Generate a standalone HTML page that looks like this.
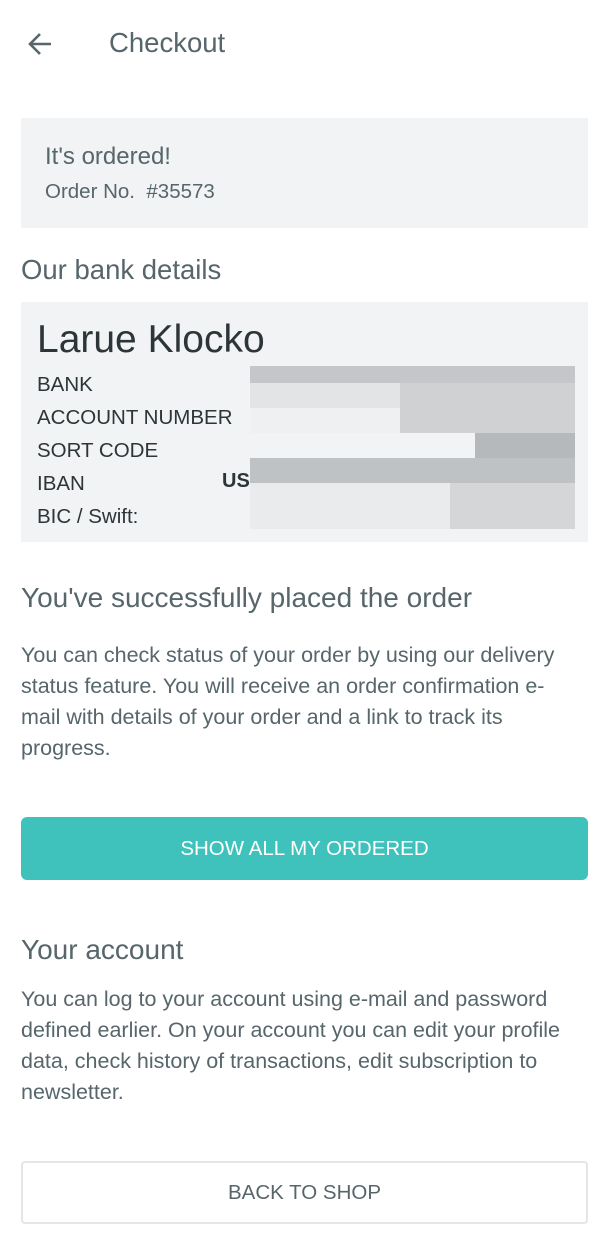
<!DOCTYPE html>
<html><head><meta charset="utf-8"><style>
*{margin:0;padding:0;box-sizing:border-box}
body{width:608px;height:1258px;background:#fff;font-family:"Liberation Sans",sans-serif;color:#56666b;position:relative;overflow:hidden}
.a{position:absolute}
.blk{position:absolute;background:#b9bcbf}
</style></head><body>
<svg class="a" style="left:26px;top:30px" width="28" height="28" viewBox="0 0 28 28"><path d="M25 14H4M14 4L4 14l10 10" stroke="#56666b" stroke-width="2.6" fill="none"/></svg>
<div class="a" style="left:109px;top:27px;font-size:27.5px">Checkout</div>
<div class="a" style="left:21px;top:118px;width:567px;height:110px;background:#f2f3f5"></div>
<div class="a" style="left:45px;top:143px;font-size:24px">It's ordered!</div>
<div class="a" style="left:45px;top:180px;font-size:20.5px">Order No. &nbsp;#35573</div>
<div class="a" style="left:21px;top:254px;font-size:27.5px">Our bank details</div>
<div class="a" style="left:21px;top:302px;width:567px;height:240px;background:#f2f3f5"></div>
<div class="a" style="left:37px;top:318px;font-size:39px;color:#2c3538">Larue Klocko</div>
<div class="a" style="left:37px;top:368px;font-size:20.5px;color:#2c3538;line-height:33px">BANK<br>ACCOUNT NUMBER<br>SORT CODE<br>IBAN<br>BIC / Swift:</div>
<div class="a" style="left:222px;top:470px;font-size:20px;font-weight:bold;color:#2c3538">US</div>
<div class="blk" style="left:250px;top:366px;width:325px;height:17px;background:#c4c6c9"></div>
<div class="blk" style="left:250px;top:383px;width:325px;height:25px;background:#e2e4e6"></div>
<div class="blk" style="left:400px;top:383px;width:175px;height:50px;background:#cfd1d3"></div>
<div class="blk" style="left:250px;top:408px;width:150px;height:25px;background:#eef0f1"></div>
<div class="blk" style="left:475px;top:433px;width:100px;height:25px;background:#b6b9bc"></div>
<div class="blk" style="left:250px;top:458px;width:325px;height:25px;background:#bfc2c5"></div>
<div class="blk" style="left:250px;top:483px;width:200px;height:46px;background:#e9ebec"></div>
<div class="blk" style="left:450px;top:483px;width:125px;height:46px;background:#d4d6d8"></div>
<div class="a" style="left:21px;top:582px;font-size:28px">You've successfully placed the order</div>
<div class="a" style="left:21px;top:640px;width:560px;font-size:21.5px;line-height:31px">You can check status of your order by using our delivery status feature. You will receive an order confirmation e-mail with details of your order and a link to track its progress.</div>
<div class="a" style="left:21px;top:817px;width:567px;height:63px;background:#40c2bc;border-radius:6px;color:#fff;font-size:20.5px;text-align:center;line-height:63px">SHOW ALL MY ORDERED</div>
<div class="a" style="left:21px;top:934px;font-size:28px">Your account</div>
<div class="a" style="left:21px;top:984px;width:568px;font-size:21.5px;line-height:31px">You can log to your account using e-mail and password defined earlier. On your account you can edit your profile data, check history of transactions, edit subscription to newsletter.</div>
<div class="a" style="left:21px;top:1161px;width:567px;height:63px;border:2px solid #e3e5e6;border-radius:4px;font-size:20.5px;text-align:center;line-height:59px">BACK TO SHOP</div>
</body></html>
